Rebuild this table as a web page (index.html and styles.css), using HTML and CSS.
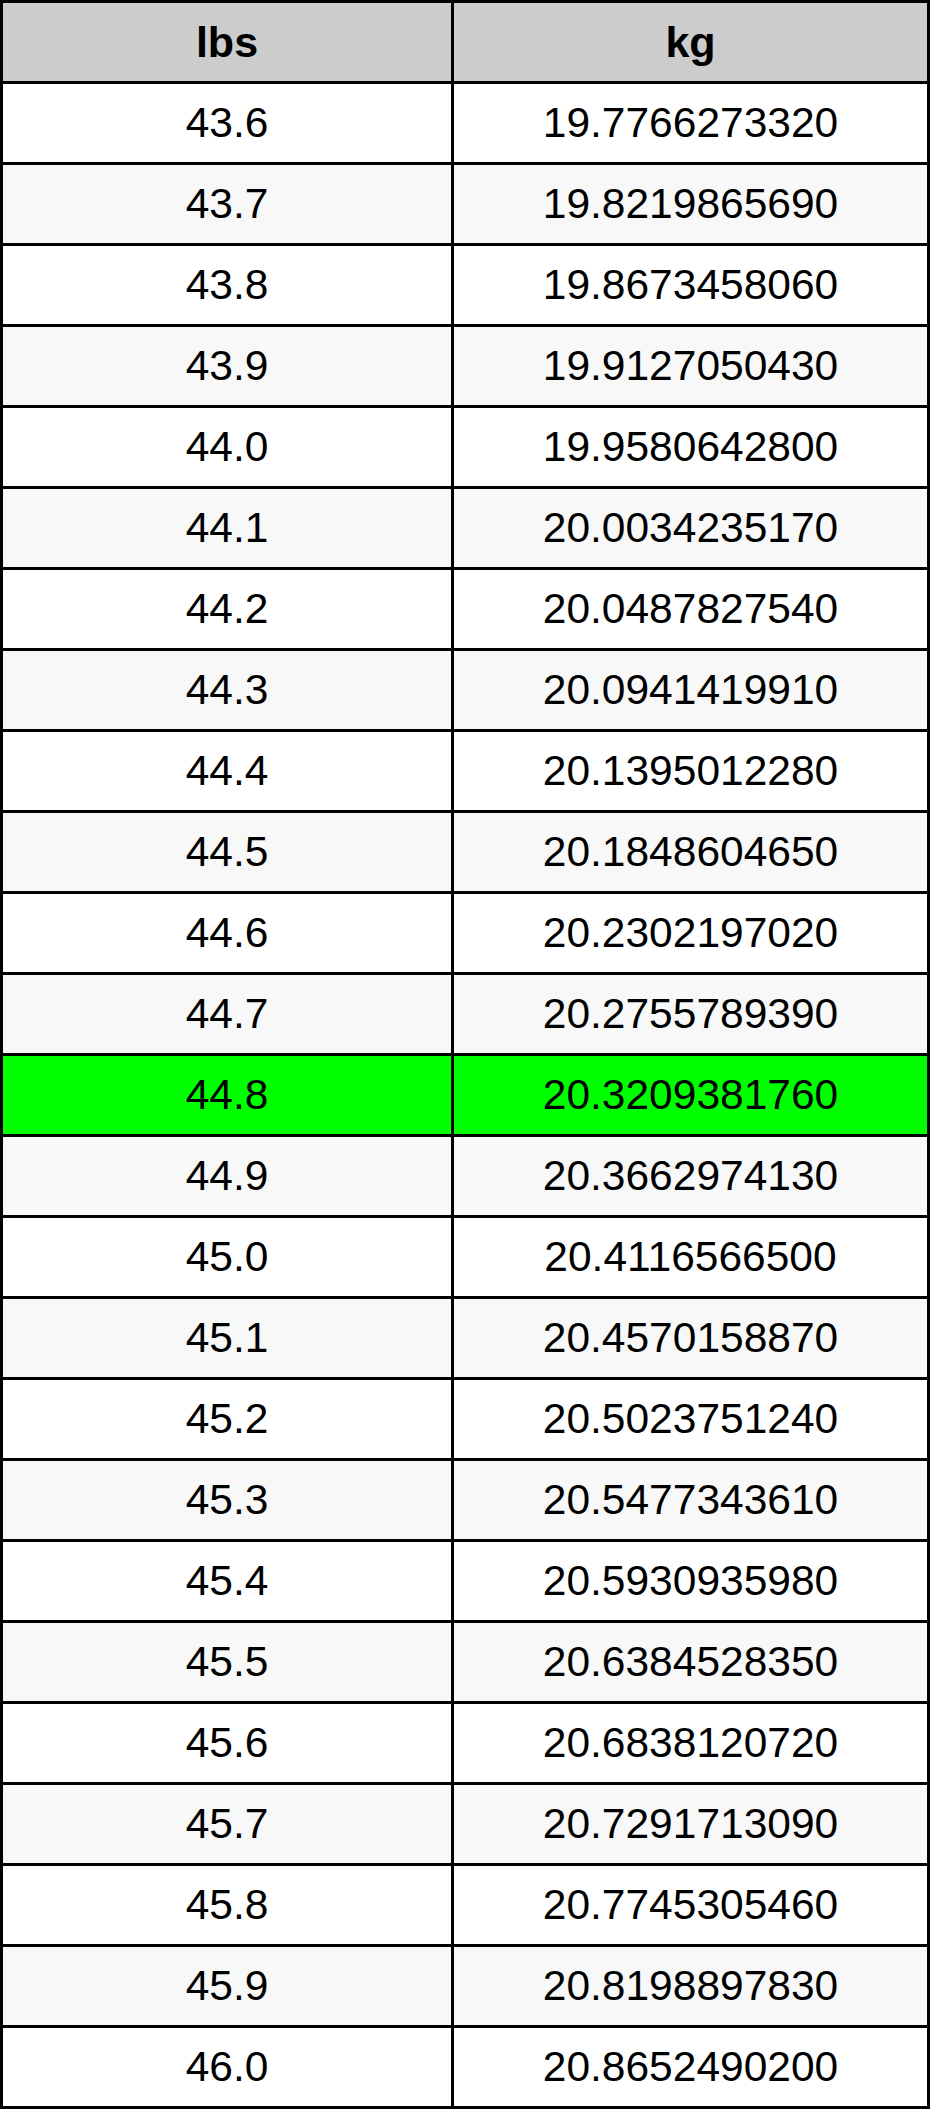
FILE: index.html
```html
<!DOCTYPE html>
<html>
<head>
<meta charset="utf-8">
<title>lbs to kg</title>
<link rel="stylesheet" href="styles.css">
</head>
<body>
<table class="conv">
<colgroup><col class="c1"><col class="c2"></colgroup>
<thead>
<tr><th>lbs</th><th>kg</th></tr>
</thead>
<tbody>
<tr><td>43.6</td><td>19.7766273320</td></tr>
<tr class="alt"><td>43.7</td><td>19.8219865690</td></tr>
<tr><td>43.8</td><td>19.8673458060</td></tr>
<tr class="alt"><td>43.9</td><td>19.9127050430</td></tr>
<tr><td>44.0</td><td>19.9580642800</td></tr>
<tr class="alt"><td>44.1</td><td>20.0034235170</td></tr>
<tr><td>44.2</td><td>20.0487827540</td></tr>
<tr class="alt"><td>44.3</td><td>20.0941419910</td></tr>
<tr><td>44.4</td><td>20.1395012280</td></tr>
<tr class="alt"><td>44.5</td><td>20.1848604650</td></tr>
<tr><td>44.6</td><td>20.2302197020</td></tr>
<tr class="alt"><td>44.7</td><td>20.2755789390</td></tr>
<tr class="hi"><td>44.8</td><td>20.3209381760</td></tr>
<tr class="alt"><td>44.9</td><td>20.3662974130</td></tr>
<tr><td>45.0</td><td>20.4116566500</td></tr>
<tr class="alt"><td>45.1</td><td>20.4570158870</td></tr>
<tr><td>45.2</td><td>20.5023751240</td></tr>
<tr class="alt"><td>45.3</td><td>20.5477343610</td></tr>
<tr><td>45.4</td><td>20.5930935980</td></tr>
<tr class="alt"><td>45.5</td><td>20.6384528350</td></tr>
<tr><td>45.6</td><td>20.6838120720</td></tr>
<tr class="alt"><td>45.7</td><td>20.7291713090</td></tr>
<tr><td>45.8</td><td>20.7745305460</td></tr>
<tr class="alt"><td>45.9</td><td>20.8198897830</td></tr>
<tr><td>46.0</td><td>20.8652490200</td></tr>
</tbody>
</table>
</body>
</html>
```

FILE: styles.css
```css
html, body {
  margin: 0;
  padding: 0;
  background: #ffffff;
}

.conv {
  width: 930px;
  table-layout: fixed;
  border-collapse: separate;
  border-spacing: 3px;
  background: #000000;
  font-family: "Liberation Sans", Arial, sans-serif;
  font-size: 42.5px;
  color: #000000;
}

.conv .c1 { width: 448px; }
.conv .c2 { width: 473px; }

.conv th,
.conv td {
  height: 78px;
  padding: 0;
  text-align: center;
  vertical-align: middle;
  background: #ffffff;
  line-height: 1;
}

.conv th {
  background: #cccccc;
  font-weight: bold;
  font-size: 43px;
}

.conv tr.alt td {
  background: #f8f8f8;
}

.conv tr.hi td {
  background: #00ff00;
}
```
